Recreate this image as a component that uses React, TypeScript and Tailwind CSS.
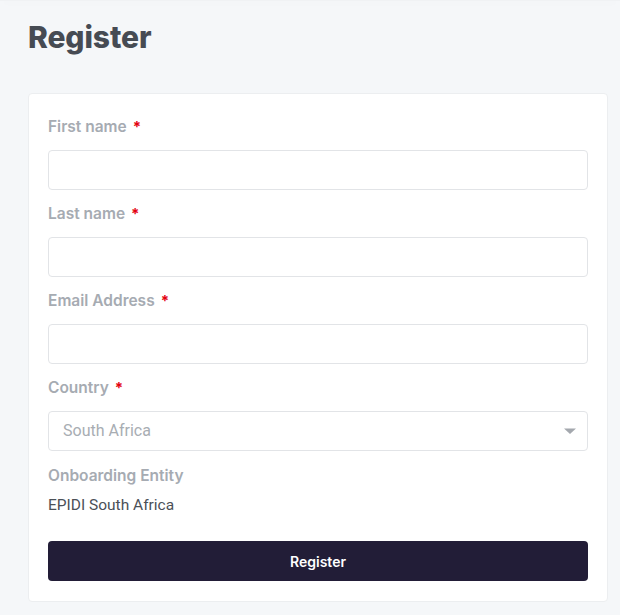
import { useState } from 'react';

function Label({ text, required }: { text: string; required?: boolean }) {
  return (
    <label className="mb-[11px] flex h-6 items-center text-[15.5px] font-semibold text-[#a6abb2]">
      {text}
      {required && <span className="ml-[6px] text-[15px] font-bold text-[#e3000f]">*</span>}
    </label>
  );
}

function TextField({ label }: { label: string }) {
  const [value, setValue] = useState('');
  return (
    <div className="mb-3">
      <Label text={label} required />
      <input
        value={value}
        onChange={(e) => setValue(e.target.value)}
        className="block h-10 w-full rounded-[4px] border border-[#e2e4e7] bg-white px-3 text-[15px] text-[#4b5057] outline-none"
      />
    </div>
  );
}

export default function App() {
  return (
    <div className="min-h-[615px] bg-[#f5f7f9] font-['Roboto',sans-serif]">
      <div className="h-px bg-[#f0f2f4] shadow-[0_2px_8px_rgba(0,0,0,0.05)]" />
      <div className="px-7 pt-4">
        <h1 className="h-[40px] text-[30px] font-extrabold leading-[40px] tracking-[-0.1px] text-[#464b53] font-['Inter',sans-serif]">
          Register
        </h1>
        <div className="mt-[36px] w-[580px] rounded-[4px] border border-[#eceef0] bg-white px-[19px] pb-5 pt-[21px] font-['Inter',sans-serif]">
          <TextField label="First name" />
          <TextField label="Last name" />
          <TextField label="Email Address" />
          <div className="mb-[13px]">
            <Label text="Country" required />
            <div className="flex h-10 items-center justify-between rounded-[4px] border border-[#e2e4e7] pl-[14px] pr-[10px]">
              <span className="font-['Roboto',sans-serif] text-[16px] text-[#a8adb3]">South Africa</span>
              <svg width="14" height="8" viewBox="0 0 14 8" aria-hidden>
                <path d="M1 1.5h12L7 7z" fill="#a4a8ae" />
              </svg>
            </div>
          </div>
          <Label text="Onboarding Entity" />
          <div className="-mt-[6px] font-['Roboto',sans-serif] text-[15.5px] leading-6 text-[#4b5057]">
            EPIDI South Africa
          </div>
          <button className="mt-[24px] flex h-10 w-full items-center justify-center rounded-[4px] bg-[#221d37] font-['Inter',sans-serif] text-[14px] font-semibold text-white">
            Register
          </button>
        </div>
      </div>
    </div>
  );
}
